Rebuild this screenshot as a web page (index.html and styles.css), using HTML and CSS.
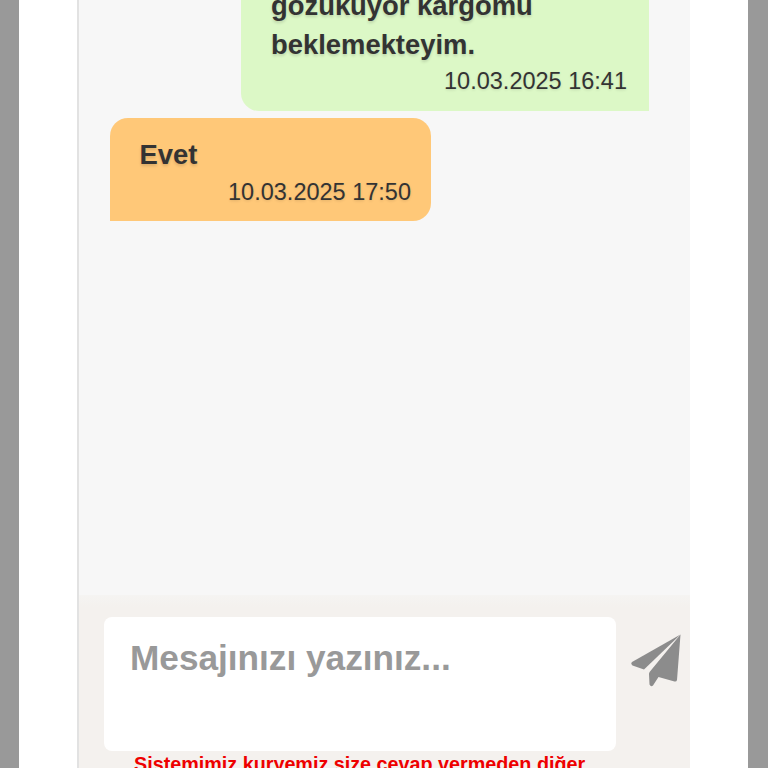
FILE: index.html
```html
<!DOCTYPE html>
<html lang="tr">
<head>
<meta charset="utf-8">
<title>Mesajlar</title>
<link rel="stylesheet" href="styles.css">
</head>
<body>
<div class="sheet">
  <main class="chat">
    <section class="thread">
      <article class="bubble bubble-out">
        <p class="text">gözüküyor kargomu<br>beklemekteyim.</p>
        <time class="stamp">10.03.2025 16:41</time>
      </article>
      <article class="bubble bubble-in">
        <p class="text">Evet</p>
        <time class="stamp">10.03.2025 17:50</time>
      </article>
    </section>
    <section class="composer">
      <div class="composer-row">
        <div class="field">Mesajınızı yazınız...</div>
        <svg class="send" viewBox="0 0 52 54" aria-hidden="true">
          <path d="M49.5 0.5 L1 28 Q-0.5 30 1.5 31.5 L13 35.5 Z" />
          <path d="M49.5 0.5 L19 37.5 Q18 38.5 18 40 L18.5 50.5 Q20 53.5 22 51.5 L27.5 43 L43.5 47.5 Q45.5 48 46 46 Z" />
        </svg>
      </div>
      <p class="warning">Sistemimiz kuryemiz size cevap vermeden diğer</p>
    </section>
  </main>
</div>
</body>
</html>
```
FILE: styles.css
```css
* { box-sizing: border-box; }
html, body { margin: 0; height: 768px; overflow: hidden; }
body {
  background: #999999;
  padding: 0 20px 0 19px;
  font-family: "Liberation Sans", Arial, sans-serif;
}
.sheet {
  height: 768px;
  background: #ffffff;
  padding: 0 58px;
}
.chat {
  height: 768px;
  background: #f7f7f7;
  border-left: 2px solid #e2e2e2;
  display: flex;
  flex-direction: column;
  overflow: hidden;
}
.thread {
  flex: 1;
  min-height: 0;
  padding: 0 41px 0 30.5px;
  display: flex;
  flex-direction: column;
  gap: 7px;
}
.bubble { padding: 0 20px; }
.bubble-out {
  align-self: flex-end;
  width: 408px;
  height: 125.5px;
  margin-top: -14.5px;
  padding-left: 30px;
  padding-right: 22px;
  background: #dcf8c6;
  border-bottom-left-radius: 18px;
}
.bubble-in {
  align-self: flex-start;
  width: 321.5px;
  height: 103px;
  padding-top: 17px;
  padding-left: 30px;
  background: #ffc878;
  border-radius: 18px 18px 18px 0;
}
.text {
  margin: 0;
  font-size: 27.4px;
  font-weight: 700;
  line-height: 39px;
  color: #333333;
  text-shadow: 0 2px 3px rgba(0, 0, 0, 0.14);
}
.stamp {
  display: block;
  text-align: right;
  font-size: 23.5px;
  line-height: 32px;
  margin-top: 1px;
  color: #333333;
  text-shadow: 0 1px 3px rgba(0, 0, 0, 0.12);
}
.bubble-in .stamp { margin-top: 2px; }
.composer {
  height: 173px;
  flex: none;
  background: linear-gradient(#f5f4f2, #f4f1ee 12px);
  padding: 22px 0 0 25px;
}
.composer-row {
  display: flex;
  align-items: flex-start;
  gap: 15px;
}
.field {
  width: 512px;
  height: 134px;
  background: #ffffff;
  border-radius: 8px;
  padding: 20px 26px;
  font-size: 35.2px;
  font-weight: 700;
  line-height: 42px;
  color: #999999;
}
.send {
  width: 52px;
  height: 54px;
  margin-top: 17px;
  fill: #8c8c8c;
}
.warning {
  margin: 0;
  padding-top: 1px;
  padding-left: 30px;
  font-size: 19.75px;
  font-weight: 700;
  line-height: 24px;
  color: #ee0000;
  white-space: nowrap;
}
```
